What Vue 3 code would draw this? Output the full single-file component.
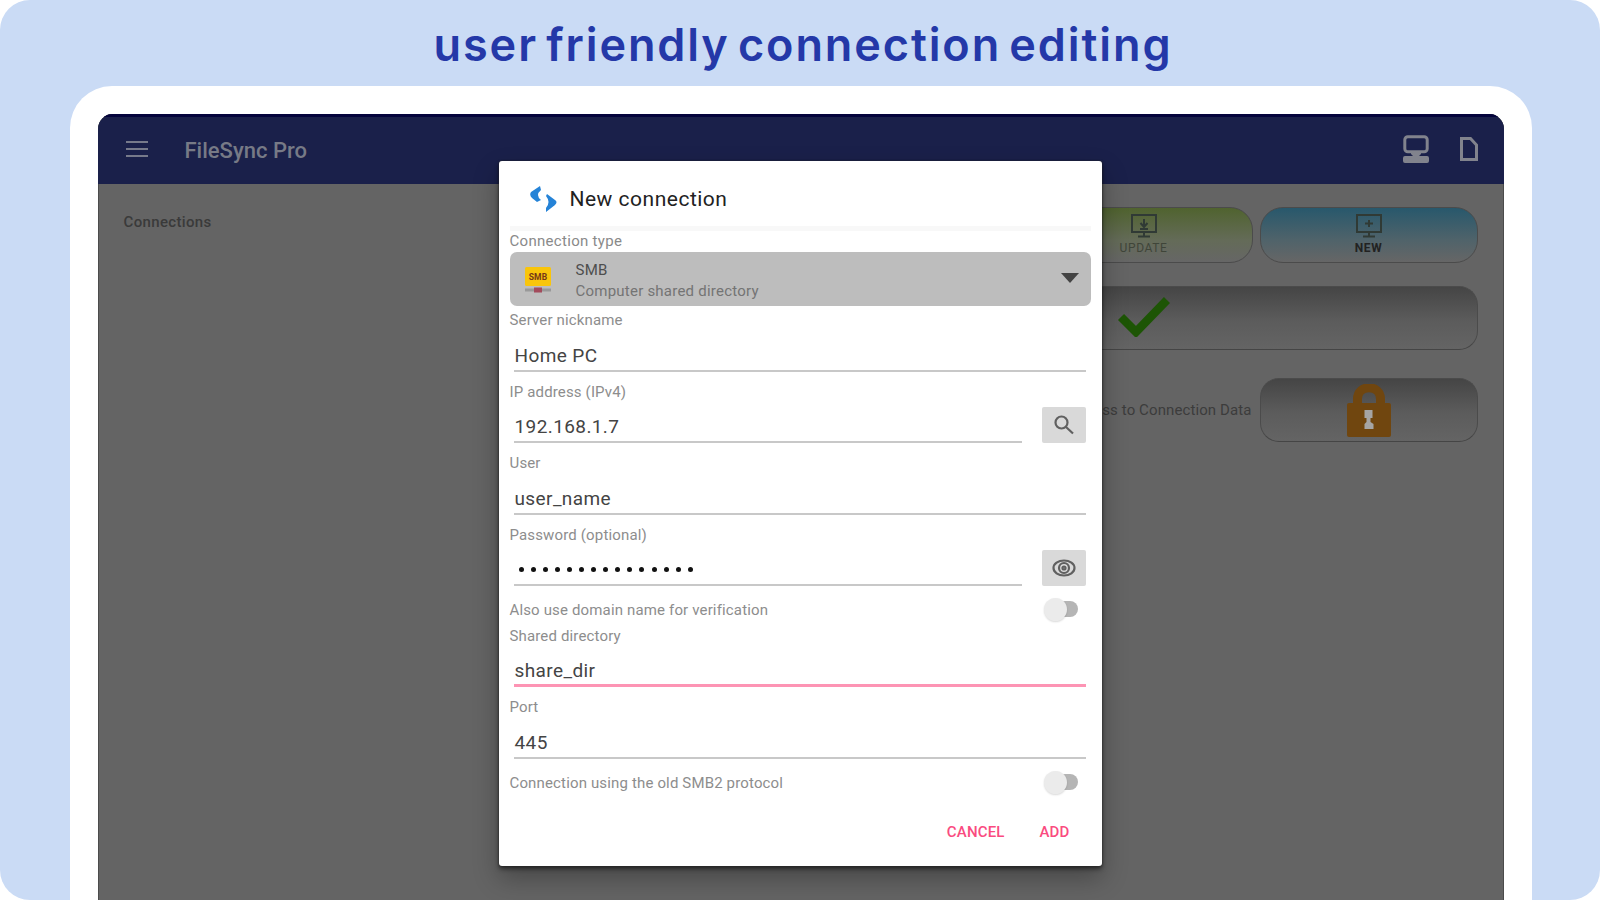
<template>
  <div class="promo">
    <h1 class="headline">user friendly connection editing</h1>
    <div class="bezel">
      <div class="screen">
        <header class="appbar">
          <svg class="menu" viewBox="0 0 22 18"><path d="M0 2h22M0 9h22M0 16h22" /></svg>
          <span class="app-name">FileSync Pro</span>
          <svg class="computer" viewBox="0 0 26 28">
            <rect x="1.8" y="1.8" width="22.4" height="15" rx="3" />
            <path class="solid" d="M8 17h10v2l-2 2h8q2 0 2 2v3q0 2-2 2H2q-2 0-2-2v-3q0-2 2-2h8l-2-2z" />
          </svg>
          <svg class="file" viewBox="0 0 18 24"><path d="M1.5 1.5h9l6 6.500v14.500h-15z" /></svg>
        </header>
        <main class="page">
          <span class="section">Connections</span>
          <div class="panel">
            <div class="tiles">
              <button class="tile update">
                <svg viewBox="0 0 26 24">
                  <path d="M1 1h24v17H1zM13 18v4M7 22.500h12M13 5v7M9.500 9l3.500 4 3.500-4M9 15h8" />
                </svg>
                <span>UPDATE</span>
              </button>
              <button class="tile new">
                <svg viewBox="0 0 26 24">
                  <path d="M1 1h24v17H1zM13 18v4M7 22.500h12M9 9.500h8M13 6v7" />
                </svg>
                <span>NEW</span>
              </button>
            </div>
            <button class="plain confirm">
              <svg viewBox="0 0 52 41"><path d="M3 21l15 15L49 4" /></svg>
            </button>
            <div class="access">
              <span>Access to Connection Data</span>
              <button class="plain lock">
                <svg viewBox="0 0 44 53">
                  <path class="shackle" d="M10.500 22v-7c0-15 23-15 23 0v7" />
                  <rect y="19" width="44" height="34" rx="2" />
                  <path class="hole" d="M17.500 26h8v8h-2v4l3 2v5h-9v-5l2-2v-4h-2z" />
                </svg>
              </button>
            </div>
          </div>
        </main>
        <section class="dialog">
          <div class="dialog-title">
            <svg viewBox="0 0 27 26">
              <path d="M10 0L1 6Q-1 9 2 12L7 16 11 14Q5 9 11 4z" />
              <path d="M17 8L25 14Q28 16 25 19L16 26V22Q21 16 16 10z" />
            </svg>
            <span>New connection</span>
          </div>
          <div class="divider"></div>
          <div class="type-label">Connection type</div>
          <div class="select">
            <svg class="smb" viewBox="0 0 26 27">
              <rect class="yellow" width="26" height="19" rx="1.500" />
              <text x="13" y="12.500" text-anchor="middle">SMB</text>
              <path class="cable" d="M0 23h26" />
              <rect class="plug" x="9" y="20.500" width="8" height="5" />
            </svg>
            <div class="option">
              <span class="name">SMB</span>
              <span class="desc">Computer shared directory</span>
            </div>
            <svg class="arrow" viewBox="0 0 18 10"><path d="M0 0h18l-9 10z" /></svg>
          </div>
          <template v-for="row in rows" :key="row.label">
            <div v-if="row.toggle" class="toggle">
              <span>{{ row.label }}</span>
              <i class="switch"></i>
            </div>
            <div v-else class="field">
              <div class="entry" :class="{ active: row.active }">
                <label>{{ row.label }}</label>
                <div class="value">
                  <div v-if="row.password" class="dots"><i v-for="n in 15" :key="n"></i></div>
                  <span v-else>{{ row.value }}</span>
                </div>
              </div>
              <button v-if="row.icon" class="action">
                <svg v-if="row.icon === 'search'" viewBox="0 0 20 20">
                  <circle cx="7.500" cy="7.500" r="6" /><path d="M12 12l7 6.500" />
                </svg>
                <svg v-else class="eye" viewBox="0 0 24 18">
                  <ellipse cx="12" cy="9" rx="10.500" ry="7.500" /><circle cx="12" cy="9" r="5" />
                  <circle cx="12" cy="9" r="1.500" />
                </svg>
              </button>
            </div>
          </template>
          <footer class="buttons"><span class="cancel">CANCEL</span><span class="add">ADD</span></footer>
        </section>
      </div>
    </div>
  </div>
</template>

<script setup>
const rows = [
  { label: 'Server nickname', value: 'Home PC' },
  { label: 'IP address (IPv4)', value: '192.168.1.7', icon: 'search' },
  { label: 'User', value: 'user_name' },
  { label: 'Password (optional)', password: true, icon: 'eye' },
  { label: 'Also use domain name for verification', toggle: true },
  { label: 'Shared directory', value: 'share_dir', active: true },
  { label: 'Port', value: '445' },
  { label: 'Connection using the old SMB2 protocol', toggle: true }
]
</script>

<style>
body { margin: 0; background: #fff; }
</style>

<style scoped>
* { box-sizing: border-box; }
svg { display: block; flex: none; fill: none; }
button { border: 0; padding: 0; font: inherit; }
.promo {
  width: 1600px; height: 900px; overflow: hidden;
  display: flex; flex-direction: column; align-items: center;
  background: #cadbf5; border-radius: 30px;
  font-family: Roboto, sans-serif;
}
.headline {
  margin: 0; height: 86px; line-height: 90px; padding-left: 6px; white-space: nowrap;
  font-family: Inter, sans-serif; font-size: 45px; font-weight: 600; letter-spacing: 1.9px; word-spacing: -5px;
  color: #2438a8;
}
.bezel {
  width: 1462px; height: 814px; margin-left: 1px; padding: 28px 28px 0;
  background: #fff; border-radius: 42px 42px 0 0;
}
.screen {
  position: relative; height: 786px; overflow: hidden;
  background: #646464; border-radius: 15px 15px 0 0;
  box-shadow: inset 1px 0 #4b4b4b, inset -1px 0 #4b4b4b;
}
.appbar {
  height: 70px; display: flex; align-items: center; padding: 0 26px 0 28px;
  background: #1a204a; box-shadow: inset 0 3px #04043c;
}
.menu { width: 22px; height: 18px; stroke: #777a8b; stroke-width: 2; }
.app-name { flex: 1; margin-left: 37px; padding-top: 2px; font-size: 22px; font-weight: 500; color: #777a86; }
.computer { width: 26px; height: 28px; stroke: #81838d; stroke-width: 3; }
.computer .solid { fill: #81838d; stroke: none; }
.file { width: 18px; height: 24px; margin-left: 31px; stroke: #81838d; stroke-width: 3; }

.page { display: flex; justify-content: space-between; padding: 23px 26px 0 26px; }
.section { height: 30px; padding-top: 6px; font-size: 15px; font-weight: 500; line-height: 18px; letter-spacing: 0.35px; color: #3a3a3a; }
.panel { width: 667px; display: flex; flex-direction: column; }
.tiles { display: flex; justify-content: flex-end; gap: 7px; }
.tile {
  width: 218px; height: 56px; padding-top: 6px;
  display: flex; flex-direction: column; align-items: center; gap: 3px;
  border: 1px solid #4b4b4b; border-radius: 23px; font-size: 12px; line-height: 14px; letter-spacing: 0.6px;
}
.tile svg { width: 26px; height: 24px; stroke: #303a35; stroke-width: 2; }
.update { background: linear-gradient(#50632f, #646b58 60%, #666); color: #3f4539; }
.new { background: linear-gradient(#28586c, #50636a 60%, #666); color: #222; font-weight: 700; }
.plain {
  height: 64px; display: flex; align-items: center; justify-content: center;
  border: 1px solid #4b4b4b; border-bottom-color: #454545; border-radius: 19px;
  background: linear-gradient(#454545, #5c5c5c 55%, #646464);
}
.confirm { margin-top: 23px; padding-bottom: 3px; }
.confirm svg { width: 52px; height: 41px; stroke: #1d5505; stroke-width: 8.5; }
.access {
  margin-top: 28px; display: flex; align-items: center; justify-content: flex-end; gap: 8px;
  font-size: 15px; letter-spacing: 0.1px; color: #3c3c3c;
}
.lock { width: 218px; }
.lock svg { width: 44px; height: 53px; fill: #70460f; }
.shackle { fill: none; stroke: #70460f; stroke-width: 9; }
.hole { fill: #a5a5a5; }

/* modal sits over the dimmed page */
.dialog {
  position: absolute; left: 401px; top: 47px; width: 603px; height: 705px;
  padding: 0 11px; display: flex; flex-direction: column;
  background: #fff; border-radius: 3px; letter-spacing: 0.15px;
  box-shadow: 0 0 2px #222, 0 3px 4px rgba(0, 0, 0, 0.5), 0 12px 26px rgba(0, 0, 0, 0.3);
}
.dialog-title { height: 65px; padding: 10px 0 0 20px; display: flex; align-items: center; gap: 13px; }
.dialog-title svg { width: 27px; height: 26px; fill: #2583d7; }
.dialog-title span { font-size: 21px; letter-spacing: 0.5px; color: #222; }
.divider { height: 5px; background: #f8f8f8; }
.type-label { height: 21px; line-height: 20px; font-size: 15px; letter-spacing: 0.3px; color: #8a8a8a; }
.select {
  height: 54px; margin-bottom: -6px; padding: 2px 12px 0 15px;
  display: flex; align-items: center; background: #bdbdbd; border-radius: 7px;
}
.smb { width: 26px; height: 27px; margin-top: 1px; }
.yellow { fill: #f9c50b; }
.smb text { font: 700 8.5px Roboto, sans-serif; fill: #753818; }
.cable { stroke: #999; stroke-width: 3; }
.plug { fill: #a34b5c; }
.option { flex: 1; margin-left: 25px; padding-top: 1px; display: flex; flex-direction: column; font-size: 15px; line-height: 21px; letter-spacing: 0.23px; }
.name { color: #4e4e4e; }
.desc { color: #747474; }
.arrow { width: 18px; height: 10px; margin-bottom: 4px; fill: #444; }

.field { height: 71.6px; flex: none; display: flex; align-items: flex-end; gap: 20px; padding-right: 5px; }
.entry { flex: 1; }
label { display: block; height: 39.6px; line-height: 40px; font-size: 15px; color: #8d8d8d; }
.value {
  height: 32px; margin-left: 4px; padding-left: 1px; line-height: 32px;
  border-bottom: 2px solid #c8c8c8; font-size: 19px; letter-spacing: 0.4px; color: #444;
}
.active .value { border-bottom: 3px solid #fd94b4; }
.dots { height: 31px; display: flex; align-items: center; gap: 7.1px; padding-left: 4px; }
.dots i { width: 5px; height: 5px; border-radius: 50%; background: #111; }
.action { width: 44px; height: 36px; display: grid; place-items: center; background: #d9d9d9; border-radius: 2px; }
.action svg { width: 20px; height: 20px; stroke: #606060; stroke-width: 2.2; }
.action .eye { width: 24px; height: 18px; }
.toggle {
  height: 29.5px; flex: none; padding-right: 13px;
  display: flex; align-items: flex-end; justify-content: space-between;
  font-size: 15px; line-height: 12px; color: #8d8d8d;
}
.switch {
  position: relative; width: 31px; height: 16px; margin-bottom: -1px;
  border-radius: 8px; background: #b5b5b5;
}
.switch::before {
  content: ''; position: absolute; left: -3px; top: -3px; width: 23px; height: 23px;
  border-radius: 50%; background: #ebebeb; box-shadow: 0 1px 2px rgba(0, 0, 0, 0.15);
}
.buttons {
  flex: 1; padding: 9px 21px 0 0; display: flex; align-items: center; justify-content: flex-end;
  gap: 35px; font-size: 15px; font-weight: 500; color: #fa4b80;
}
</style>
